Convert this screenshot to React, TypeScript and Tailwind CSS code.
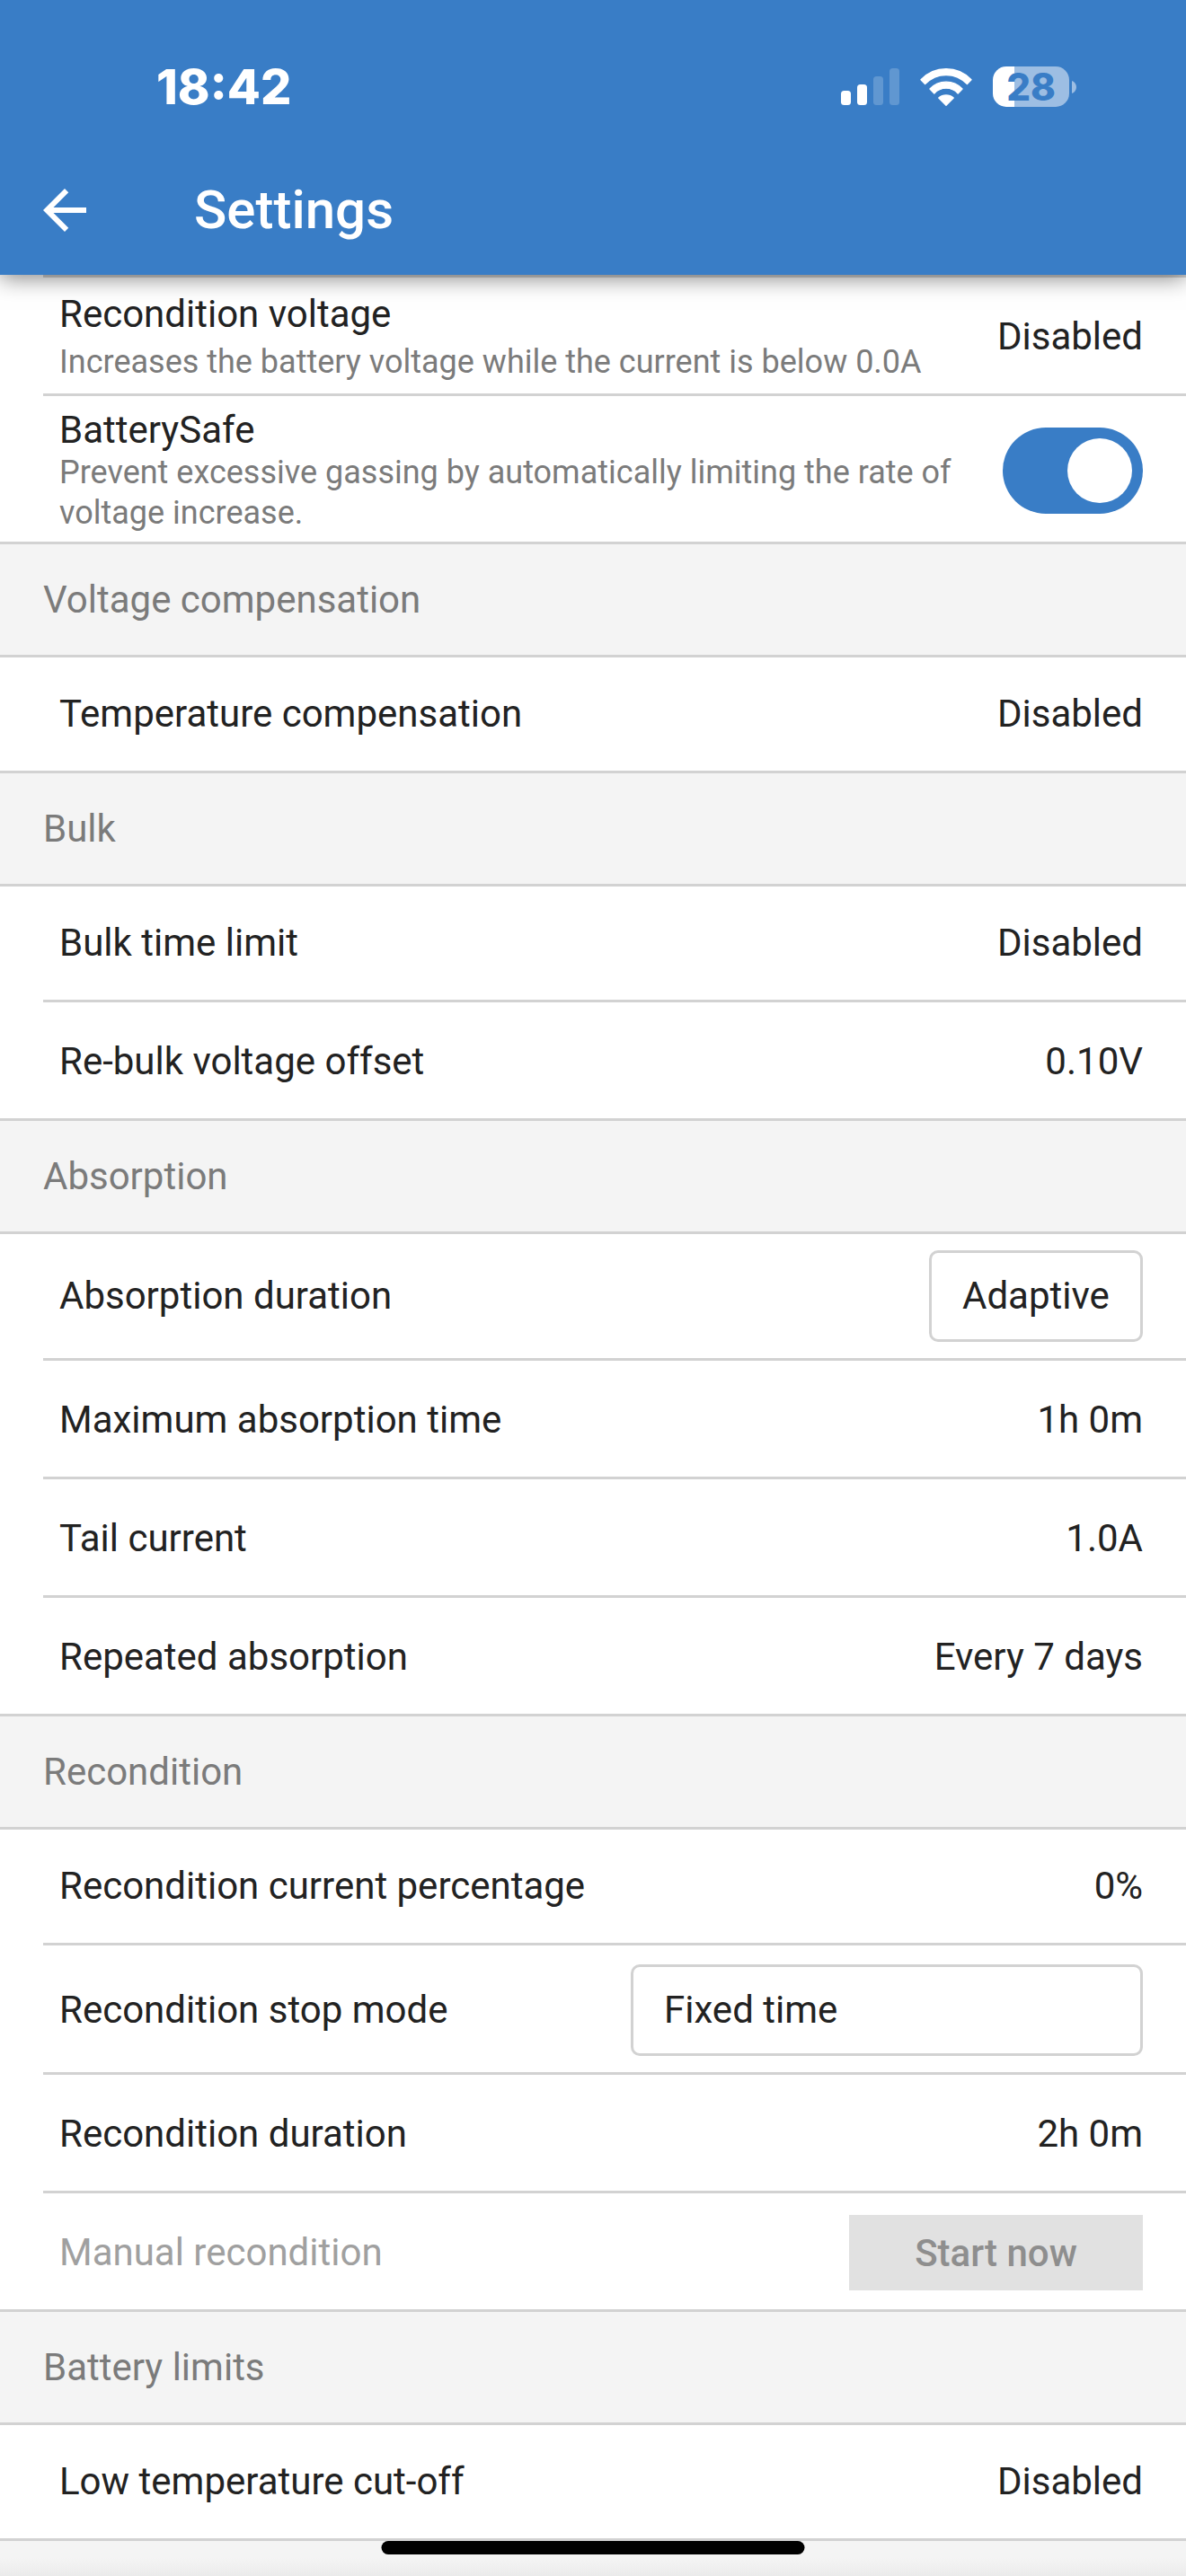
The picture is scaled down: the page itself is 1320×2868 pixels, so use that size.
import { useState, type ReactNode } from "react";

function SignalIcon() {
  return (
    <svg width="65" height="41" viewBox="0 0 65 41" fill="#fff" aria-hidden="true">
      <rect x="0" y="25" width="11" height="16" rx="3.5" />
      <rect x="18" y="18" width="11" height="23" rx="3.5" />
      <rect x="36" y="9" width="11" height="32" rx="3.5" opacity="0.2" />
      <rect x="54" y="0" width="11" height="41" rx="3.5" opacity="0.2" />
    </svg>
  );
}

function WifiIcon() {
  return (
    <svg width="58" height="42" viewBox="0 0 58 42" fill="#fff" stroke="#fff" strokeWidth="1.4" strokeLinejoin="round" aria-hidden="true">
      <path d="M1 12.8A38.5 38.5 0 0 1 57 12.8L52.4 17.6A32 32 0 0 0 5.6 17.6Z" />
      <path d="M11 23A24.6 24.6 0 0 1 47 23L42.2 27.9A18 18 0 0 0 15.8 27.9Z" />
      <path d="M20.8 33A12.5 12.5 0 0 1 37.2 33L29 41.2Z" />
    </svg>
  );
}

function Battery() {
  return (
    <div className="flex items-center gap-[3px]">
      <div className="flex h-[45px] w-[85px] items-center justify-center rounded-[15px] bg-[linear-gradient(to_right,#fff_24px,#9dbee3_24px)] text-[42px] leading-[45px] font-extrabold text-[#397dc6]">
        28
      </div>
      <svg width="5" height="14" viewBox="0 0 5 14" fill="#9dbee3" aria-hidden="true">
        <path d="M0 0C3 1 5 4 5 7S3 13 0 14Z" />
      </svg>
    </div>
  );
}

function SectionTitle({ children }: { children: ReactNode }) {
  return (
    <h2 className="flex h-[129px] items-center border-y-[3px] border-[#d2d2d2] bg-[#f4f4f4] px-12 text-[42px] leading-[50px] text-[#7b7b7b]">
      {children}
    </h2>
  );
}

type RowProps = {
  id: string;
  label: string;
  hint?: string;
  tall?: boolean;
  divided?: boolean;
  disabled?: boolean;
  children: ReactNode;
};

function Row({ id, label, hint, tall, divided, disabled, children }: RowProps) {
  return (
    <div className={divided ? "border-t-[3px] border-[#d2d2d2] pt-[3px]" : ""}>
      <div className={`flex items-center justify-between gap-6 pr-12 pl-[18px] ${tall ? "min-h-[159px]" : "min-h-[126px]"}`}>
        <div className="flex-1">
          <label htmlFor={id} className={disabled ? "block leading-[50px] text-[#a0a0a0]" : "block leading-[50px]"}>
            {label}
          </label>
          {hint && (
            <p className={tall ? "text-[36px] leading-[45px] text-[#7b7b7b]" : "mt-1.5 text-[36px] leading-[45px] text-[#7b7b7b]"}>
              {hint}
            </p>
          )}
        </div>
        {children}
      </div>
    </div>
  );
}

function ValueRow({ value, ...row }: Omit<RowProps, "children"> & { value: string }) {
  return (
    <Row {...row}>
      <button id={row.id} type="button" className="leading-[50px]">
        {value}
      </button>
    </Row>
  );
}

const selectClass = "my-[18px] h-[102px] appearance-none rounded-[10px] border-[3px] border-[#d2d2d2] bg-white px-[34px] leading-[50px]";

export default function App() {
  const [safe, setSafe] = useState(true);

  return (
    <div className="relative flex min-h-screen flex-col bg-white font-[Roboto,sans-serif] text-[42px] text-[#222]">
      <header className="relative z-10 bg-[#397dc6] text-white shadow-[0_3px_24px_rgba(0,0,0,0.5)]">
        <div className="flex h-[162px] items-end justify-between pr-[122px] pb-10 pl-[174px] font-[Inter,sans-serif]">
          <time className="text-[54px] leading-[50px] font-extrabold">18:42</time>
          <div className="flex items-center gap-[23px] pb-[3px]">
            <SignalIcon />
            <WifiIcon />
            <Battery />
          </div>
        </div>
        <div className="flex h-36 items-center pl-9">
          <button type="button" aria-label="Back" className="mr-[108px]">
            <svg width="72" height="72" viewBox="0 0 24 24" fill="currentColor" aria-hidden="true">
              <path d="M20 11H7.83l5.59-5.59L12 4l-8 8 8 8 1.41-1.41L7.83 13H20v-2z" />
            </svg>
          </button>
          <h1 className="text-[60px] leading-[72px] font-medium">Settings</h1>
        </div>
      </header>

      <main className="flex flex-1 flex-col">
        <div className="pl-12">
          <ValueRow id="recondition-voltage" divided label="Recondition voltage" hint="Increases the battery voltage while the current is below 0.0A" value="Disabled" />
          <Row id="battery-safe" divided tall label="BatterySafe" hint="Prevent excessive gassing by automatically limiting the rate of voltage increase.">
            <input
              id="battery-safe"
              type="checkbox"
              role="switch"
              checked={safe}
              onChange={(e) => setSafe(e.target.checked)}
              className="flex h-24 w-[156px] shrink-0 appearance-none items-center rounded-full bg-[#b5b5b5] p-3 before:size-[72px] before:rounded-full before:bg-white checked:justify-end checked:bg-[#397dc6]"
            />
          </Row>
        </div>

        <SectionTitle>Voltage compensation</SectionTitle>
        <div className="pl-12">
          <ValueRow id="temperature-compensation" label="Temperature compensation" value="Disabled" />
        </div>

        <SectionTitle>Bulk</SectionTitle>
        <div className="pl-12">
          <ValueRow id="bulk-time-limit" label="Bulk time limit" value="Disabled" />
          <ValueRow id="rebulk-offset" divided label="Re-bulk voltage offset" value="0.10V" />
        </div>

        <SectionTitle>Absorption</SectionTitle>
        <div className="pl-12">
          <Row id="absorption-duration" label="Absorption duration">
            <select id="absorption-duration" className={selectClass}>
              <option>Adaptive</option>
              <option>Fixed</option>
            </select>
          </Row>
          <ValueRow id="max-absorption-time" divided label="Maximum absorption time" value="1h 0m" />
          <ValueRow id="tail-current" divided label="Tail current" value="1.0A" />
          <ValueRow id="repeated-absorption" divided label="Repeated absorption" value="Every 7 days" />
        </div>

        <SectionTitle>Recondition</SectionTitle>
        <div className="pl-12">
          <ValueRow id="recondition-current" label="Recondition current percentage" value="0%" />
          <Row id="recondition-stop-mode" divided label="Recondition stop mode">
            <select id="recondition-stop-mode" className={`${selectClass} w-[570px]`}>
              <option>Fixed time</option>
              <option>Automatic</option>
            </select>
          </Row>
          <ValueRow id="recondition-duration" divided label="Recondition duration" value="2h 0m" />
          <Row id="manual-recondition" divided disabled label="Manual recondition">
            <button id="manual-recondition" type="button" disabled className="h-[84px] w-[327px] bg-[#e1e1e1] font-medium text-[#8e8e8e]">
              Start now
            </button>
          </Row>
        </div>

        <SectionTitle>Battery limits</SectionTitle>
        <div className="pl-12">
          <ValueRow id="low-temperature" label="Low temperature cut-off" value="Disabled" />
        </div>
        <div className="flex-1 border-t-[3px] border-[#d2d2d2] bg-[#f4f4f4] bg-[linear-gradient(to_top,#ebebeb,#f4f4f4_20px)]" />
      </main>

      <div className="absolute bottom-6 left-1/2 h-[15px] w-[471px] -translate-x-1/2 rounded-full bg-black" />
    </div>
  );
}
